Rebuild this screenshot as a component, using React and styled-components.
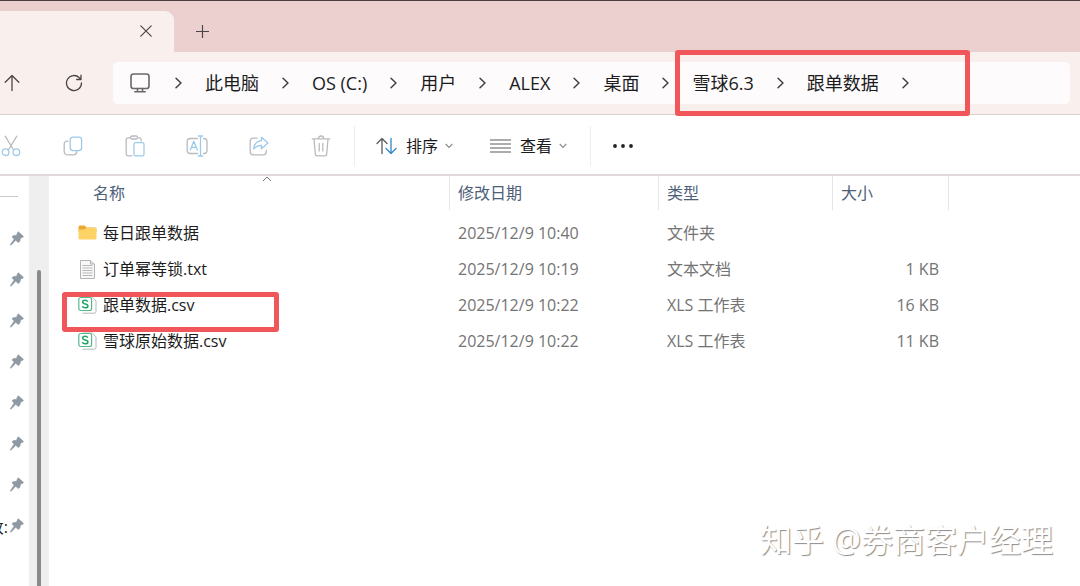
import React from 'react';
import styled, { createGlobalStyle, ThemeProvider } from 'styled-components';

const theme = {
  text: '#1c1c1c',
  muted: '#747474',
  heading: '#4d6079',
  titleBar: '#ecd0d0',
  chrome: '#f9f0ee',
  line: '#dccfd0',
  divider: '#e6e6e6',
  mark: '#f1575a',
  iconGrey: '#b9bbbf',
  iconBlue: '#9ccbea'
};

const GlobalStyle = createGlobalStyle`
  * {
    box-sizing: border-box;
  }

  html, body, #root {
    height: 100%;
  }

  body {
    margin: 0;
    background: #fff;
    color: #1c1c1c;
    font-family: 'Open Sans', 'Noto Sans CJK SC', sans-serif;
    font-size: 16px;
    overflow: hidden;
  }

  svg {
    display: block;
    flex: none;
  }
`;

const Window = styled.div`
  display: flex;
  flex-direction: column;
  height: 100%;
  border-top: 1px solid #4b3c40;
`;

const TitleBar = styled.header`
  display: flex;
  height: 51px;
  padding-top: 10px;
  background: ${p => p.theme.titleBar};
  border-bottom: 1px solid #e6d0d0;
`;

const IconButton = styled.button`
  display: inline-flex;
  align-items: center;
  justify-content: center;
  width: 24px;
  height: 32px;
  padding: 0;
  border: 0;
  background: none;
  color: #4a4546;
`;

const Tab = styled.div`
  display: flex;
  align-items: flex-start;
  justify-content: flex-end;
  width: 174px;
  height: 41px;
  padding: 4px 16px 0 0;
  border-radius: 0 9px 0 0;
  background: ${p => p.theme.chrome};
`;

const NewTab = styled(IconButton)`
  margin: 4px 16px 0;
`;

const NavBar = styled.nav`
  display: flex;
  align-items: center;
  height: 63px;
  padding-right: 10px;
  background: ${p => p.theme.chrome};
  border-bottom: 1px solid ${p => p.theme.line};
`;

const NavButtons = styled.div`
  display: flex;
  gap: 38px;
  width: 113px;
`;

const Address = styled.div`
  position: relative;
  display: flex;
  align-items: center;
  gap: 24px;
  flex: 1;
  height: 42px;
  padding-left: 17px;
  border-radius: 5px;
  background: #fdfbfc;
`;

const Crumbs = styled.div`
  display: flex;
  align-items: center;
  gap: 22px;
`;

const Crumb = styled.a`
  color: ${p => p.theme.text};
  font-size: 18px;
  line-height: 24px;
  white-space: nowrap;
  text-decoration: none;
`;

const Mark = styled.div`
  position: absolute;
  top: ${p => p.$top}px;
  left: ${p => p.$left}px;
  width: ${p => p.$width}px;
  height: ${p => p.$height}px;
  border: 5px solid ${p => p.theme.mark};
  border-radius: 3px;
  pointer-events: none;
  z-index: 1;
`;

const ToolBar = styled.div`
  display: flex;
  align-items: center;
  height: 61px;
  padding-top: 2px;
  border-bottom: 2px solid #e3d9da;
`;

const Actions = styled.div`
  display: flex;
  align-items: center;
  gap: 38px;
  width: 355px;
  height: 40px;
  border-right: 1px solid #ededed;

  > button {
    width: 24px;
    padding-right: 2px;
  }
`;

const Menus = styled.div`
  display: flex;
  align-items: center;
  gap: 37px;
  width: 236px;
  height: 40px;
  padding-left: 21px;
  border-right: 1px solid #ededed;
`;

const MenuButton = styled.button`
  display: flex;
  align-items: center;
  gap: 9px;
  height: 32px;
  padding: 0;
  border: 0;
  background: none;
  color: ${p => p.theme.text};
  font: inherit;
  line-height: 24px;

  > span {
    margin-right: -2px;
  }
`;

const MoreButton = styled(IconButton)`
  margin-left: 20px;
`;

const Main = styled.div`
  display: flex;
  flex: 1;
  min-height: 0;
`;

const SideBar = styled.aside`
  width: 29px;
  padding-top: 20px;
  overflow: hidden;
`;

const SideDivider = styled.hr`
  width: 18px;
  margin: 0 0 21px;
  border: 0;
  border-top: 1px solid #c9c9c9;
`;

const PinRow = styled.div`
  display: flex;
  align-items: center;
  justify-content: flex-end;
  gap: 2px;
  height: 41px;
  padding-right: 5px;
  white-space: nowrap;
`;

const ScrollTrack = styled.div`
  display: flex;
  justify-content: center;
  width: 20px;
  padding-top: 94px;
  background: #efefef;
`;

const ScrollThumb = styled.div`
  width: 4px;
  border-radius: 2px 2px 0 0;
  background: #8a8a8a;
`;

const FilePane = styled.main`
  position: relative;
  flex: 1;
`;

const FileTable = styled.table`
  width: 900px;
  table-layout: fixed;
  border-collapse: collapse;
`;

const HeadCell = styled.th`
  height: 39px;
  padding: 0 0 5px ${p => p.$indent || 0}px;
  font-weight: 400;
`;

const SortButton = styled.button`
  position: relative;
  display: block;
  width: 100%;
  height: 34px;
  padding: 0 8px;
  border: 0;
  border-right: 1px solid ${p => p.theme.divider};
  background: none;
  color: ${p => p.theme.heading};
  font: inherit;
  line-height: 24px;
  text-align: left;
`;

const SortArrow = styled.svg`
  position: absolute;
  top: 0;
  left: 50%;
  transform: translateX(-50%);
`;

const Cell = styled.td`
  height: 36px;
  padding: 0 10px 0 8px;
  color: ${p => p.theme.muted};
  line-height: 24px;
  text-align: ${p => p.$align || 'left'};
  white-space: nowrap;
`;

const FileName = styled.a`
  display: flex;
  align-items: center;
  gap: 6px;
  padding-left: 21px;
  color: ${p => p.theme.text};
  text-decoration: none;
`;

const Watermark = styled.div`
  position: absolute;
  right: 27px;
  bottom: 26px;
  color: #fff;
  font-size: 32px;
  line-height: 40px;
  text-shadow: 1px 1px 1px #8c8c8c;
  white-space: nowrap;
`;

const Chevron = () => (
  <svg width="9" height="12" viewBox="0 0 9 12" fill="none" stroke="#3f3b3c" strokeWidth="1.4" strokeLinecap="round" strokeLinejoin="round">
    <path d="M2 1.2 7 6 2 10.8" />
  </svg>
);

const SmallArrow = () => (
  <svg width="8" height="6" viewBox="0 0 8 6" fill="none" stroke="#8a8a8a" strokeWidth="1.1">
    <path d="M.7 1 4 4.4 7.3 1" />
  </svg>
);

const CloseIcon = () => (
  <svg width="12" height="12" viewBox="0 0 12 12" fill="none" stroke="currentColor" strokeWidth="1.2" strokeLinecap="round">
    <path d="M.8.8l10.4 10.4M11.2.8.8 11.2" />
  </svg>
);

const PlusIcon = () => (
  <svg width="13" height="13" viewBox="0 0 13 13" fill="none" stroke="currentColor" strokeWidth="1.2" strokeLinecap="round">
    <path d="M6.5.5v12M.5 6.5h12" />
  </svg>
);

const UpIcon = () => (
  <svg width="16" height="18" viewBox="0 0 16 18" fill="none" stroke="currentColor" strokeWidth="1.3" strokeLinecap="round" strokeLinejoin="round">
    <path d="M8 16.5V1.5M1.2 8.3 8 1.5l6.8 6.8" />
  </svg>
);

const RefreshIcon = () => (
  <svg width="18" height="18" viewBox="0 0 18 18" fill="none" stroke="currentColor" strokeWidth="1.3" strokeLinecap="round" strokeLinejoin="round">
    <path d="M16.5 9a7.5 7.5 0 1 1-2.2-5.3L16 5.3M16 1.2v4.3h-4.3" />
  </svg>
);

const MonitorIcon = () => (
  <svg width="20" height="20" viewBox="0 0 20 20" fill="none" stroke="#6b686a" strokeWidth="1.6" strokeLinecap="round">
    <rect x="1" y="1" width="18" height="14.5" rx="2.6" />
    <path d="M7.5 15.5v3M12.5 15.5v3M4.8 18.8h10.4" />
  </svg>
);

const CutIcon = ({ grey, blue }) => (
  <svg width="20" height="22" viewBox="1 0 20 22" fill="none" strokeWidth="1.3" strokeLinecap="round">
    <path d="M5.2 1.2 13.6 15M16.8 1.2 8.4 15" stroke={grey} />
    <circle cx="5.6" cy="17.2" r="3.3" stroke={blue} />
    <circle cx="16.4" cy="17.2" r="3.3" stroke={blue} />
  </svg>
);

const CopyIcon = ({ grey, blue }) => (
  <svg width="20" height="20" viewBox="0 0 20 20" fill="none" strokeWidth="1.3" strokeLinecap="round">
    <path d="M5 5.2H4A2.8 2.8 0 0 0 1.2 8v7.6A3.2 3.2 0 0 0 4.4 18.8h6.4a2.8 2.8 0 0 0 2.8-2.8v-.4" stroke={grey} />
    <rect x="7.2" y="1.2" width="11.4" height="13.4" rx="2.8" stroke={blue} />
  </svg>
);

const PasteIcon = ({ grey, blue }) => (
  <svg width="20" height="22" viewBox="0 0 20 22" fill="none" strokeWidth="1.3" strokeLinecap="round">
    <path d="M5.5 2.8H3A1.8 1.8 0 0 0 1.2 4.6V19A1.8 1.8 0 0 0 3 20.8h4M12.5 2.8h1.9a1.8 1.8 0 0 1 1.8 1.8V6" stroke={grey} />
    <rect x="5.5" y="1" width="7" height="3" rx="1.5" stroke={grey} />
    <rect x="9" y="7.6" width="10" height="13.2" rx="1.6" stroke={blue} />
  </svg>
);

const RenameIcon = ({ grey, blue }) => (
  <svg width="22" height="22" viewBox="0 0 22 22" fill="none" strokeWidth="1.3" strokeLinecap="round" strokeLinejoin="round">
    <path d="M11.5 3.5H4.2a3 3 0 0 0-3 3v9a3 3 0 0 0 3 3h7.300M17.500 3.500h.5a3 3 0 0 1 3 3v9a3 3 0 0 1-3 3h-.5" stroke={grey} />
    <path d="M4.300 15 7.800 6.300l3.500 8.700M5.500 12.300h4.600M14.500 1v20M12.300 1h4.400M12.300 21h4.400" stroke={blue} />
  </svg>
);

const ShareIcon = ({ grey, blue }) => (
  <svg width="20" height="20" viewBox="0 0 20 20" fill="none" strokeWidth="1.3" strokeLinecap="round" strokeLinejoin="round">
    <path d="M8 2.2H4.2a3 3 0 0 0-3 3v10.600a3 3 0 0 0 3 3h10.100a3 3 0 0 0 3-3v-1.300" stroke={grey} />
    <path d="M12.500 1.300 18.900 7l-6.400 5.700V9.500C9 9.300 6.700 10.500 4.700 13c.4-4.800 3-7.900 7.800-8.400z" stroke={blue} />
  </svg>
);

const DeleteIcon = ({ grey }) => (
  <svg width="20" height="22" viewBox="0 0 20 22" fill="none" stroke={grey} strokeWidth="1.3" strokeLinecap="round" strokeLinejoin="round">
    <path d="M1.200 3.800h17.600M7.400 3.600a2.600 2.600 0 0 1 5.200 0M3 3.800l1.300 15.300a1.800 1.800 0 0 0 1.800 1.700h7.800a1.800 1.800 0 0 0 1.800-1.700L17 3.800M8.200 8.500v7.500M11.800 8.500v7.500" />
  </svg>
);

const SortIcon = () => (
  <svg width="21" height="18" viewBox="0 0 21 18" fill="none" strokeWidth="1.3" strokeLinecap="round" strokeLinejoin="round">
    <path d="M6 16.500V1.500M1 6.500l5-5 5 5" stroke="#5a5a5a" />
    <path d="M15 1.500v15M10 11.500l5 5 5-5" stroke="#2f86c5" />
  </svg>
);

const ViewIcon = () => (
  <svg width="21" height="14" viewBox="0 0 21 14" stroke="#5a5a5a" strokeWidth="1.2">
    <path d="M0 1h21M0 5h21M0 9h21M0 13h21" />
  </svg>
);

const MoreIcon = () => (
  <svg width="22" height="6" viewBox="0 0 22 6" fill="#222">
    <circle cx="3" cy="3" r="1.900" />
    <circle cx="11" cy="3" r="1.900" />
    <circle cx="19" cy="3" r="1.900" />
  </svg>
);

const PinIcon = () => (
  <svg width="14" height="15" viewBox="0 0 14 15" fill="#8e99a3">
    <path d="M8.300.8 13.400 5.300 12.800 6.300 10.600 7 9.800 10.300 8.300 11.600 5.700 9.300 1 14.300.3 13.700 4.200 8 2 5.900 3 4.700 6.600 4.200 7.600 1.500z" stroke="#8e99a3" strokeWidth=".6" strokeLinejoin="round" />
  </svg>
);

const FolderIcon = () => (
  <svg width="19" height="18" viewBox="0 0 19 18">
    <path d="M.5 3a1.500 1.500 0 0 1 1.500-1.500h4.600L8.500 3.500H17A1.500 1.500 0 0 1 18.500 5v3H.5z" fill="#eaa92f" />
    <path d="M.5 5.600h6L8.300 4H17.300a1.200 1.200 0 0 1 1.200 1.200v9.100a1.200 1.200 0 0 1-1.200 1.200H1.700A1.200 1.200 0 0 1 .5 14.300z" fill="#fdd367" />
  </svg>
);

const TextFileIcon = () => (
  <svg width="19" height="19" viewBox="0 0 19 19">
    <path d="M2.500.5h10l4 3.500v14.500h-14z" fill="#f8f8f8" stroke="#b4b4b4" />
    <path d="M12.500.5V4h4" fill="#e4e4e4" stroke="#b4b4b4" />
    <path d="M4.500 5.500h10M4.500 8h10M4.500 10.500h10M4.500 13h10M4.500 15.500h10" stroke="#b6b9bc" />
  </svg>
);

const SheetIcon = () => (
  <svg width="19" height="18" viewBox="0 0 19 18" fill="none">
    <path d="M4.500 1h9.700L18 4.800v10.700a1.700 1.700 0 0 1-1.700 1.700H4.500" fill="#fff" stroke="#b4b8b8" />
    <rect x=".8" y="1.500" width="12.800" height="13" rx="2" fill="#fff" stroke="#56b98e" strokeWidth="1.200" />
    <path d="M9.700 5.700C9.300 4.700 8.400 4.300 7.200 4.300c-1.500 0-2.600.7-2.600 1.800 0 2.600 5.300 1.200 5.300 3.800 0 1.200-1.100 1.900-2.600 1.900-1.500 0-2.600-.6-2.900-1.700" stroke="#1fa468" strokeWidth="1.500" />
  </svg>
);

const fileIcons = { folder: FolderIcon, text: TextFileIcon, sheet: SheetIcon };

const path = ['此电脑', 'OS (C:)', '用户', 'ALEX', '桌面', '雪球6.3', '跟单数据'];

const actions = [
  ['剪切', CutIcon],
  ['复制', CopyIcon],
  ['粘贴', PasteIcon],
  ['重命名', RenameIcon],
  ['共享', ShareIcon],
  ['删除', DeleteIcon]
];

const pins = ['', '', '', '', '', '', '', '改:'];

const files = [
  { name: '每日跟单数据', date: '2025/12/9 10:40', type: '文件夹', size: '', icon: 'folder' },
  { name: '订单幂等锁.txt', date: '2025/12/9 10:19', type: '文本文档', size: '1 KB', icon: 'text' },
  { name: '跟单数据.csv', date: '2025/12/9 10:22', type: 'XLS 工作表', size: '16 KB', icon: 'sheet' },
  { name: '雪球原始数据.csv', date: '2025/12/9 10:22', type: 'XLS 工作表', size: '11 KB', icon: 'sheet' }
];

const FileRow = ({ file }) => {
  const Icon = fileIcons[file.icon];
  return (
    <tr>
      <Cell><FileName href="#"><Icon />{file.name}</FileName></Cell>
      <Cell>{file.date}</Cell>
      <Cell>{file.type}</Cell>
      <Cell $align="right">{file.size}</Cell>
    </tr>
  );
};

const App = () => (
  <ThemeProvider theme={theme}>
    <GlobalStyle />
    <Window>
      <TitleBar>
        <Tab>
          <IconButton aria-label="关闭标签页"><CloseIcon /></IconButton>
        </Tab>
        <NewTab aria-label="新建标签页"><PlusIcon /></NewTab>
      </TitleBar>
      <NavBar>
        <NavButtons>
          <IconButton aria-label="向上"><UpIcon /></IconButton>
          <IconButton aria-label="刷新"><RefreshIcon /></IconButton>
        </NavButtons>
        <Address>
          <MonitorIcon />
          <Crumbs>
            <Chevron />
            {path.map(name => (
              <React.Fragment key={name}>
                <Crumb href="#">{name}</Crumb>
                <Chevron />
              </React.Fragment>
            ))}
          </Crumbs>
          <Mark $top={-12} $left={562} $width={295} $height={66} />
        </Address>
      </NavBar>
      <ToolBar>
        <Actions>
          {actions.map(([label, Icon]) => (
            <IconButton key={label} aria-label={label}>
              <Icon grey={theme.iconGrey} blue={theme.iconBlue} />
            </IconButton>
          ))}
        </Actions>
        <Menus>
          <MenuButton><SortIcon /><span>排序</span><SmallArrow /></MenuButton>
          <MenuButton><ViewIcon /><span>查看</span><SmallArrow /></MenuButton>
        </Menus>
        <MoreButton aria-label="更多"><MoreIcon /></MoreButton>
      </ToolBar>
      <Main>
        <SideBar>
          <SideDivider />
          {pins.map((label, i) => (
            <PinRow key={i}>{label}<PinIcon /></PinRow>
          ))}
        </SideBar>
        <ScrollTrack><ScrollThumb /></ScrollTrack>
        <FilePane>
          <FileTable>
            <colgroup>
              <col width="401" />
              <col width="209" />
              <col width="174" />
              <col width="116" />
            </colgroup>
            <thead>
              <tr>
                <HeadCell $indent={36}>
                  <SortButton>
                    名称
                    <SortArrow width="10" height="6" viewBox="0 0 10 6" fill="none" stroke="#777">
                      <path d="M1 5 5 1l4 4" />
                    </SortArrow>
                  </SortButton>
                </HeadCell>
                <HeadCell><SortButton>修改日期</SortButton></HeadCell>
                <HeadCell><SortButton>类型</SortButton></HeadCell>
                <HeadCell><SortButton>大小</SortButton></HeadCell>
              </tr>
            </thead>
            <tbody>
              {files.map(file => <FileRow key={file.name} file={file} />)}
            </tbody>
          </FileTable>
          <Mark $top={116} $left={13} $width={217} $height={40} />
          <Watermark>知乎 @券商客户经理</Watermark>
        </FilePane>
      </Main>
    </Window>
  </ThemeProvider>
);

export default App;
